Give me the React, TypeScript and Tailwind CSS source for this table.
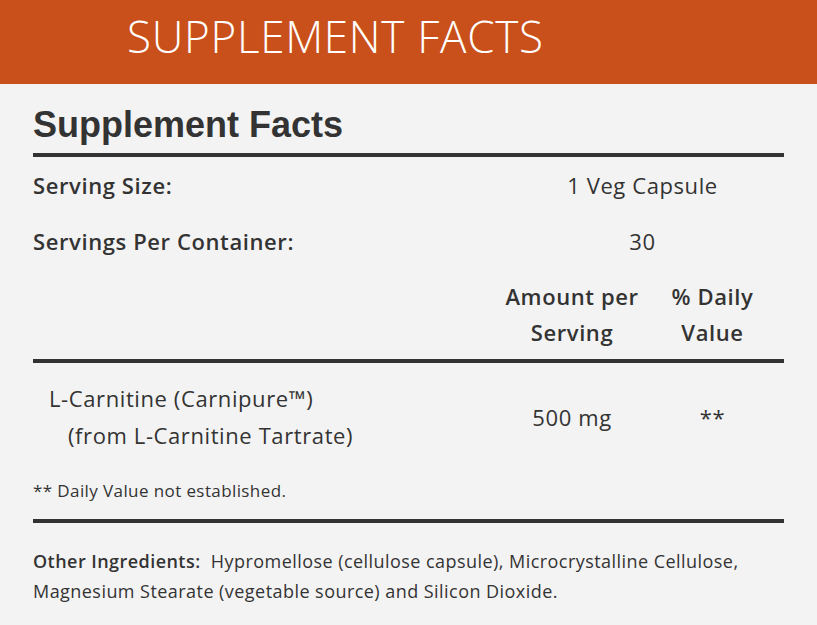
export default function App() {
  const body = { fontFamily: "'Open Sans', Lato, sans-serif" };

  return (
    <div className="w-[817px] h-[625px] bg-[#f3f3f3] overflow-hidden" style={body}>
      <div className="h-[84px] bg-[#c9501a] flex items-start pt-[14px] pl-[127px]">
        <h1 className="text-white text-[44px] font-light leading-[44px] tracking-[0.7px]">
          SUPPLEMENT FACTS
        </h1>
      </div>

      <div className="px-[33px] text-[#333]">
        <h2
          className="pt-[23px] text-[36px] font-bold leading-[36px] text-[#333]"
          style={{ fontFamily: "'Liberation Sans', Arial, sans-serif" }}
        >
          Supplement Facts
        </h2>
        <div className="mt-[10px] h-[4px] bg-[#333]" />

        <div className="grid grid-cols-[469px_140px_141px] text-[22px] tracking-[0.6px]">
          <div className="h-[56px] flex items-center font-semibold">Serving Size:</div>
          <div className="col-span-2 h-[56px] flex items-center justify-center">1 Veg Capsule</div>

          <div className="h-[56px] flex items-center font-semibold">Servings Per Container:</div>
          <div className="col-span-2 h-[56px] flex items-center justify-center">30</div>

          <div className="h-[90px]" />
          <div className="h-[90px] flex items-center justify-center text-center font-semibold leading-[36px] whitespace-nowrap">
            Amount per
            <br />
            Serving
          </div>
          <div className="h-[90px] flex items-center justify-center text-center font-semibold leading-[36px] whitespace-nowrap">
            % Daily
            <br />
            Value
          </div>
        </div>
        <div className="h-[4px] bg-[#333]" />

        <div className="grid grid-cols-[469px_140px_141px] text-[22px] tracking-[0.6px] leading-[37px]">
          <div className="h-[108px] flex flex-col justify-center pl-[16px]">
            <span>L-Carnitine (Carnipure™)</span>
            <span className="pl-[19px]">(from L-Carnitine Tartrate)</span>
          </div>
          <div className="h-[108px] flex items-center justify-center">500 mg</div>
          <div className="h-[108px] flex items-center justify-center">**</div>
        </div>

        <div className="h-[40px] flex items-center text-[17px] tracking-[0.4px]">** Daily Value not established.</div>
        <div className="mt-[8px] h-[4px] bg-[#333]" />

        <p className="pt-[23px] text-[18px] leading-[30px] tracking-[0.45px] whitespace-nowrap">
          <span className="font-semibold">Other Ingredients:</span>&nbsp; Hypromellose (cellulose capsule), Microcrystalline Cellulose,
          <br />
          Magnesium Stearate (vegetable source) and Silicon Dioxide.
        </p>
      </div>
    </div>
  );
}
